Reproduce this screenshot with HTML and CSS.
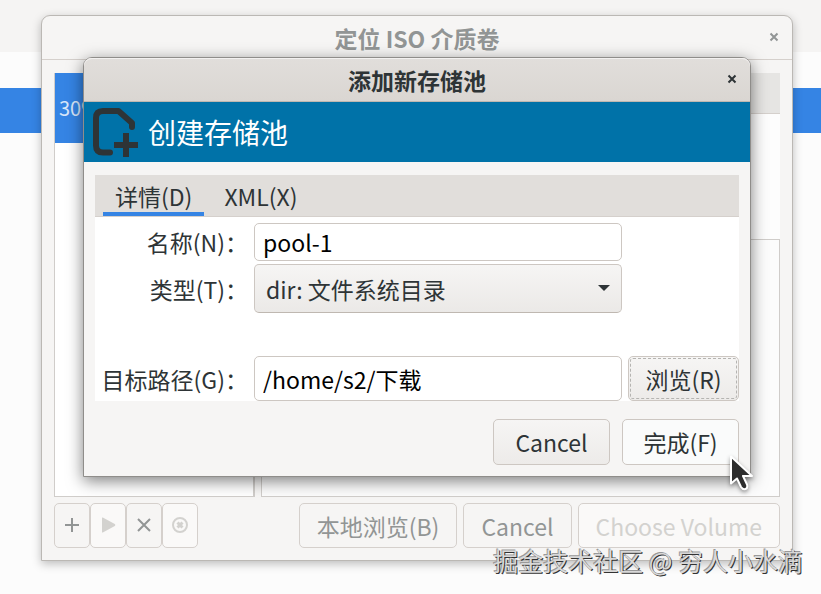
FILE: index.html
```html
<!DOCTYPE html>
<html lang="zh-CN">
<head>
  <meta charset="UTF-8">
  <meta name="viewport" content="width=device-width, initial-scale=1.0">
  <title>添加新存储池</title>
  <link rel="stylesheet" href="styles.css">
</head>
<body>
  <div class="backdrop">
    <div class="backdrop-top"></div>
    <div class="backdrop-row"></div>
  </div>

  <!-- parent window -->
  <section class="window volume-window">
    <header class="titlebar">
      <h1>定位 ISO 介质卷</h1>
      <button class="close" aria-label="Close">
        <svg viewBox="0 0 10 10"><path d="M1.5 1.5l7 7M8.5 1.5l-7 7"/></svg>
      </button>
    </header>
    <div class="volume-body">
      <div class="pools">
        <div class="pool-row">30%</div>
      </div>
      <div class="volumes">
        <div class="volume-toolbar"></div>
        <div class="volume-info"></div>
        <div class="volume-list"></div>
      </div>
    </div>
    <footer class="volume-footer">
      <div class="icon-buttons">
        <button aria-label="Add pool"><svg viewBox="0 0 20 20"><path d="M10 3v14M3 10h14"/></svg></button>
        <button aria-label="Start pool" disabled><svg viewBox="0 0 20 20"><path class="solid" d="M4 3v14q0 .8.800.4l12-6.400q1.200-1 0-2l-12-6.400q-.8-.4-.8.400z"/></svg></button>
        <button aria-label="Stop pool"><svg viewBox="0 0 20 20"><path d="M4 4l12 12M16 4l-12 12"/></svg></button>
        <button aria-label="Delete pool" disabled><svg viewBox="0 0 20 20"><circle cx="10" cy="10" r="7"/><path class="thick" d="M7.500 7.500l5 5M12.500 7.500l-5 5"/></svg></button>
      </div>
      <div class="buttons">
        <button>本地浏览(B)</button>
        <button>Cancel</button>
        <button disabled>Choose Volume</button>
      </div>
    </footer>
  </section>

  <!-- new pool dialog -->
  <section class="window dialog">
    <header class="titlebar">
      <h2>添加新存储池</h2>
      <button class="close" aria-label="Close">
        <svg viewBox="0 0 10 10"><path d="M1.5 1.5l7 7M8.5 1.5l-7 7"/></svg>
      </button>
    </header>
    <div class="banner">
      <svg viewBox="0 0 48 50"><path d="M18 45.500H11q-7 0-7-7V11q0-7 7-7h15.500L40 16v4"/><path class="plus" d="M34 26v24M22 38h24"/></svg>
      <span>创建存储池</span>
    </div>
    <div class="dialog-body">
      <div class="notebook">
        <nav class="tabs">
          <button class="tab active">详情(D)</button>
          <button class="tab">XML(X)</button>
        </nav>
        <form class="pool-form">
          <label for="name">名称(N)：</label>
          <input class="name" id="name" type="text" value="pool-1">
          <label for="type">类型(T)：</label>
          <div class="select-box">
            <select id="type">
              <option>dir: 文件系统目录</option>
            </select>
          </div>
          <label class="path-row" for="path">目标路径(G)：</label>
          <input class="path-row" id="path" type="text" value="/home/s2/下载">
          <button class="path-row browse" type="button">浏览(R)</button>
        </form>
      </div>
      <div class="dialog-actions">
        <button>Cancel</button>
        <button class="finish">完成(F)</button>
      </div>
    </div>
  </section>

  <svg class="cursor" viewBox="0 0 26 38"><path d="M3 3.500v27l6-5 4 8.500q2 3 4.500 2t1.500-4.500l-4-8.500H24z"/></svg>
  <div class="watermark">掘金技术社区 @ 穷人小水滴</div>
</body>
</html>
```

FILE: styles.css
```css
* {
  box-sizing: border-box;
}

body {
  margin: 0;
  height: 100vh;
  position: relative;
  overflow: hidden;
  background: #fcfcfc;
  color: #2e3436;
  font-family: "Noto Sans CJK SC", sans-serif;
  font-size: 23px;
  line-height: 32px;
}

h1, h2 {
  margin: 0;
  font-size: 23px;
  font-weight: bold;
}

button, input, select {
  font: inherit;
  color: inherit;
  margin: 0;
}

button {
  height: 46px;
  padding: 0;
  border: 1px solid #cdc7c2;
  border-radius: 5px;
  background: linear-gradient(#f6f5f4, #edebe9);
}

/* desktop behind the windows */
.backdrop-top {
  height: 52px;
  background: #f5f4f3;
}

.backdrop-row {
  height: 45px;
  margin-top: 36px;
  background: #3584e4;
}

.window {
  position: absolute;
  display: flex;
  flex-direction: column;
  background: #f6f5f4;
  border: 1px solid #bbb8b4;
  border-radius: 9px 9px 0 0;
}

.titlebar {
  display: grid;
  grid-template-columns: 36px 1fr 36px;
  align-items: center;
  height: 44px;
  border-bottom: 1px solid #d5d0cc;
  border-radius: 8px 8px 0 0;
}

.titlebar h1, .titlebar h2 {
  grid-column: 2;
  text-align: center;
}

.close {
  height: 32px;
  padding-bottom: 2px;
  border: 0;
  background: none;
}

.close svg {
  display: block;
  width: 10px;
  height: 10px;
  margin: auto;
  stroke: currentColor;
  stroke-width: 2;
}

/* parent window */
.volume-window {
  left: 41px;
  right: 28px;
  top: 15px;
  bottom: 33px;
  color: #929595;
  box-shadow: 0 3px 10px rgba(0, 0, 0, 0.25);
}

.volume-body {
  flex: 1;
  display: grid;
  grid-template-columns: 201px 1fr;
  gap: 6px;
  padding: 13px 12px 6px;
}

.pools {
  background: #fff;
  border: 1px solid #d0cdca;
  border-right-width: 2px;
  border-top: 0;
}

.pool-row {
  height: 70px;
  padding-left: 4px;
  background: #3584e4;
  color: #d7e6fa;
  font-size: 20px;
  line-height: 70px;
}

.volumes {
  display: flex;
  flex-direction: column;
}

.volume-toolbar {
  height: 41px;
  background: #e6e5e3;
  border-bottom: 1px solid #d5d0cc;
}

.volume-info {
  height: 125px;
  background: #fdfdfd;
}

.volume-list {
  flex: 1;
  background: #fcfcfc;
  border: 1px solid #d0cdca;
}

.volume-footer {
  display: flex;
  justify-content: space-between;
  padding: 0 12px 12px;
}

.volume-footer button {
  height: 45px;
  border-color: #d5d0cc;
  background: #f6f5f4;
}

.volume-footer button:disabled {
  color: #d3d2cf;
  background: #faf9f8;
}

.icon-buttons, .buttons {
  display: flex;
}

.icon-buttons button {
  width: 36px;
}

.icon-buttons svg {
  display: block;
  width: 20px;
  height: 20px;
  margin: -2px auto 0;
  fill: none;
  stroke: currentColor;
  stroke-width: 2;
}

.icon-buttons .solid {
  fill: currentColor;
  stroke: none;
}

.icon-buttons .thick {
  stroke-width: 3;
}

.buttons {
  gap: 6px;
}

.buttons button {
  padding: 0 17px;
}

/* dialog */
.dialog {
  left: 83px;
  right: 70px;
  top: 57px;
  border-color: #8f8d8a;
  box-shadow: 0 4px 16px rgba(0, 0, 0, 0.5);
}

.dialog .titlebar {
  border-color: #bfb8b1;
  background: linear-gradient(#e1dedb, #dad6d2);
  box-shadow: inset 0 1px #f3f1f0;
}

.banner {
  display: flex;
  align-items: center;
  gap: 8px;
  height: 60px;
  padding-left: 8px;
  background: #0072a8;
  color: #fff;
  font-size: 28px;
}

.banner svg {
  width: 48px;
  height: 50px;
  fill: none;
  stroke: #2e3436;
  stroke-width: 6;
  stroke-linecap: round;
  stroke-linejoin: round;
}

.banner .plus {
  stroke-linecap: butt;
}

.dialog-body {
  padding: 13px 11px 11px;
}

.notebook {
  background: #fff;
}

.tabs {
  display: flex;
  height: 42px;
  padding-left: 8px;
  background: #e1dedb;
  border-bottom: 1px solid #d5d0cc;
}

.tab {
  height: 41px;
  padding: 4px 12px 0;
  border: 0;
  border-bottom: 4px solid transparent;
  border-radius: 0;
  background: none;
}

.tab.active {
  border-bottom-color: #3584e4;
}

.tab + .tab {
  padding: 4px 8px 0;
  margin-left: 12px;
}

.pool-form {
  display: grid;
  grid-template-columns: 153px 1fr 111px;
  column-gap: 6px;
  row-gap: 3px;
  align-items: center;
  padding-top: 6px;
}

.pool-form label {
  grid-column: 1;
  text-align: right;
}

.pool-form input, .select-box {
  grid-column: 2;
}

.pool-form input {
  width: 100%;
  height: 45px;
  padding: 0 8px;
  color: #000;
  background: #fff;
  border: 1px solid #cdc7c2;
  border-radius: 5px;
}

.pool-form .name {
  height: 38px;
}

.pool-form .path-row {
  margin-top: 40px;
}

.select-box {
  position: relative;
}

.select-box::after {
  content: "";
  position: absolute;
  right: 12px;
  top: 21px;
  border: 6px solid transparent;
  border-top-color: #2e3436;
  border-bottom: 0;
  pointer-events: none;
}

.select-box select {
  display: block;
  width: 100%;
  height: 49px;
  padding: 0 11px;
  appearance: none;
  border: 1px solid #cdc7c2;
  border-bottom-color: #bfb8b1;
  border-radius: 5px;
  background: linear-gradient(#f6f5f4, #ebe9e7);
}

.browse {
  height: 45px;
  outline: 1px dashed #b5b4b1;
  outline-offset: -3px;
}

.dialog-actions {
  display: flex;
  justify-content: flex-end;
  gap: 12px;
  margin-top: 18px;
}

.dialog-actions button {
  width: 117px;
}

.dialog-actions .finish {
  background: #fafbfb;
}

.cursor {
  position: absolute;
  left: 728px;
  top: 453px;
  width: 26px;
  height: 38px;
  fill: #2d2d2d;
  stroke: #fff;
  stroke-width: 2;
  stroke-linejoin: round;
  filter: drop-shadow(0 2px 2px rgba(0, 0, 0, 0.4));
}

.watermark {
  position: absolute;
  right: 18px;
  bottom: 18px;
  font-size: 25px;
  color: #d8d8d8;
  text-shadow: 1px 1px 0 #333, -1px -1px 0 #999;
}
```
